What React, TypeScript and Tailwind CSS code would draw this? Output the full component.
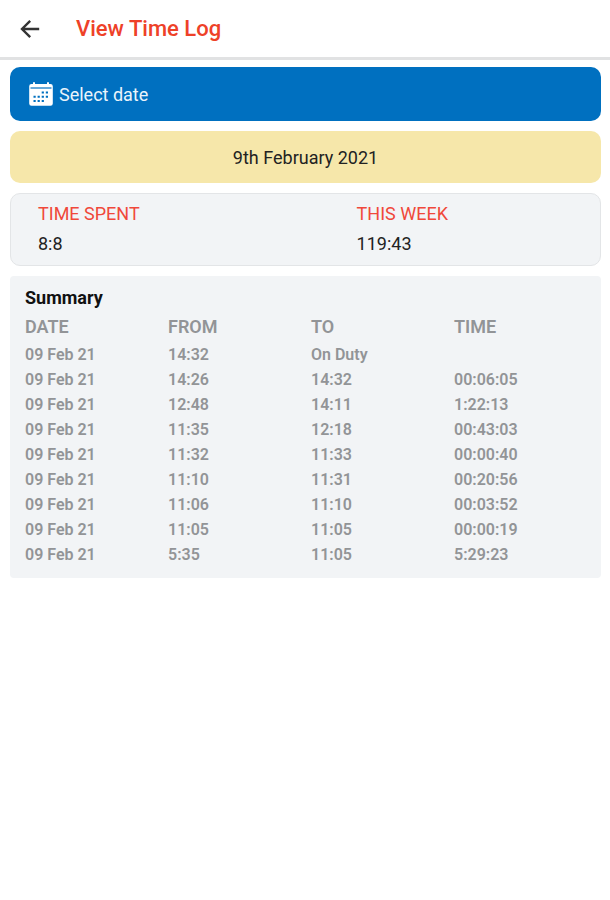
interface LogEntry {
  date: string
  from: string
  to: string
  time: string
}

const entries: LogEntry[] = [
  { date: "09 Feb 21", from: "14:32", to: "On Duty", time: "" },
  { date: "09 Feb 21", from: "14:26", to: "14:32", time: "00:06:05" },
  { date: "09 Feb 21", from: "12:48", to: "14:11", time: "1:22:13" },
  { date: "09 Feb 21", from: "11:35", to: "12:18", time: "00:43:03" },
  { date: "09 Feb 21", from: "11:32", to: "11:33", time: "00:00:40" },
  { date: "09 Feb 21", from: "11:10", to: "11:31", time: "00:20:56" },
  { date: "09 Feb 21", from: "11:06", to: "11:10", time: "00:03:52" },
  { date: "09 Feb 21", from: "11:05", to: "11:05", time: "00:00:19" },
  { date: "09 Feb 21", from: "5:35", to: "11:05", time: "5:29:23" },
]

const columns = ["DATE", "FROM", "TO", "TIME"]

function BackIcon() {
  return (
    <svg viewBox="0 0 20 20" className="size-5" fill="none" stroke="currentColor" strokeWidth="2.4" aria-hidden="true">
      <path d="M19.200 10H2.500M10.200 1.800 2 10l8.200 8.200" />
    </svg>
  )
}

function CalendarIcon() {
  return (
    <svg viewBox="0 0 24 24" className="size-6" aria-hidden="true">
      <path
        fill="#fff"
        d="M2.500 2H4V1a1 1 0 0 1 2 0v1h12V1a1 1 0 0 1 2 0v1h1.500a2.300 2.300 0 0 1 2.300 2.300v17.200a2.300 2.300 0 0 1-2.300 2.300h-19A2.300 2.300 0 0 1 .2 21.500V4.300A2.300 2.300 0 0 1 2.500 2Z"
      />
      <path stroke="#0070c0" strokeWidth="1.200" d="M1.500 6h21" />
      <path stroke="#0070c0" strokeWidth="2" strokeDasharray="2.200 1.900" d="M12.700 10.500h6.500M4.500 14.700h15M4.500 18.900h11" />
    </svg>
  )
}

function Stat({ label, value }: { label: string; value: string }) {
  return (
    <div>
      <dt className="leading-[30px] text-[#f0483a]">{label}</dt>
      <dd className="leading-[30px] text-[#222]">{value}</dd>
    </div>
  )
}

export default function App() {
  return (
    <div className="min-h-screen bg-white font-[Roboto,sans-serif] text-[18px]">
      <header className="flex h-[60px] items-center gap-9 border-b-[3px] border-[#e1e2e3] pl-5">
        <button type="button" aria-label="Back" className="text-[#333]">
          <BackIcon />
        </button>
        <h1 className="text-[22px] font-medium text-[#ee4128]">View Time Log</h1>
      </header>

      <main className="flex flex-col gap-[10px] pt-[7px] pr-[9px] pl-[10px]">
        <button
          type="button"
          className="flex h-[54px] items-center gap-[6px] rounded-[10px] bg-[#0070c0] pl-[19px] text-[#eaf4fb]"
        >
          <CalendarIcon />
          Select date
        </button>

        <p className="flex h-[52px] items-center justify-center rounded-[10px] bg-[#f6e7aa] text-[#222]">
          9th February 2021
        </p>

        <dl className="grid grid-cols-[3fr_2fr] rounded-[10px] border border-[#e3e5e7] bg-[#f2f4f6] pt-[5px] pr-[31px] pb-[6px] pl-[27px]">
          <Stat label="TIME SPENT" value="8:8" />
          <Stat label="THIS WEEK" value="119:43" />
        </dl>

        <section className="rounded-[4px] bg-[#f2f4f6] pt-2 pr-1 pb-[11px] pl-[15px]">
          <h2 className="leading-7 font-bold text-[#111]">Summary</h2>
          <table className="w-full table-fixed text-left text-[#929497]">
            <thead>
              <tr>
                {columns.map((column) => (
                  <th key={column} scope="col" className="p-0 leading-[30px] font-semibold">
                    {column}
                  </th>
                ))}
              </tr>
            </thead>
            <tbody className="text-[16px] leading-[25px] font-semibold">
              {entries.map((entry) => (
                <tr key={entry.from}>
                  <td className="p-0">{entry.date}</td>
                  <td className="p-0">{entry.from}</td>
                  <td className="p-0">{entry.to}</td>
                  <td className="p-0">{entry.time}</td>
                </tr>
              ))}
            </tbody>
          </table>
        </section>
      </main>
    </div>
  )
}
